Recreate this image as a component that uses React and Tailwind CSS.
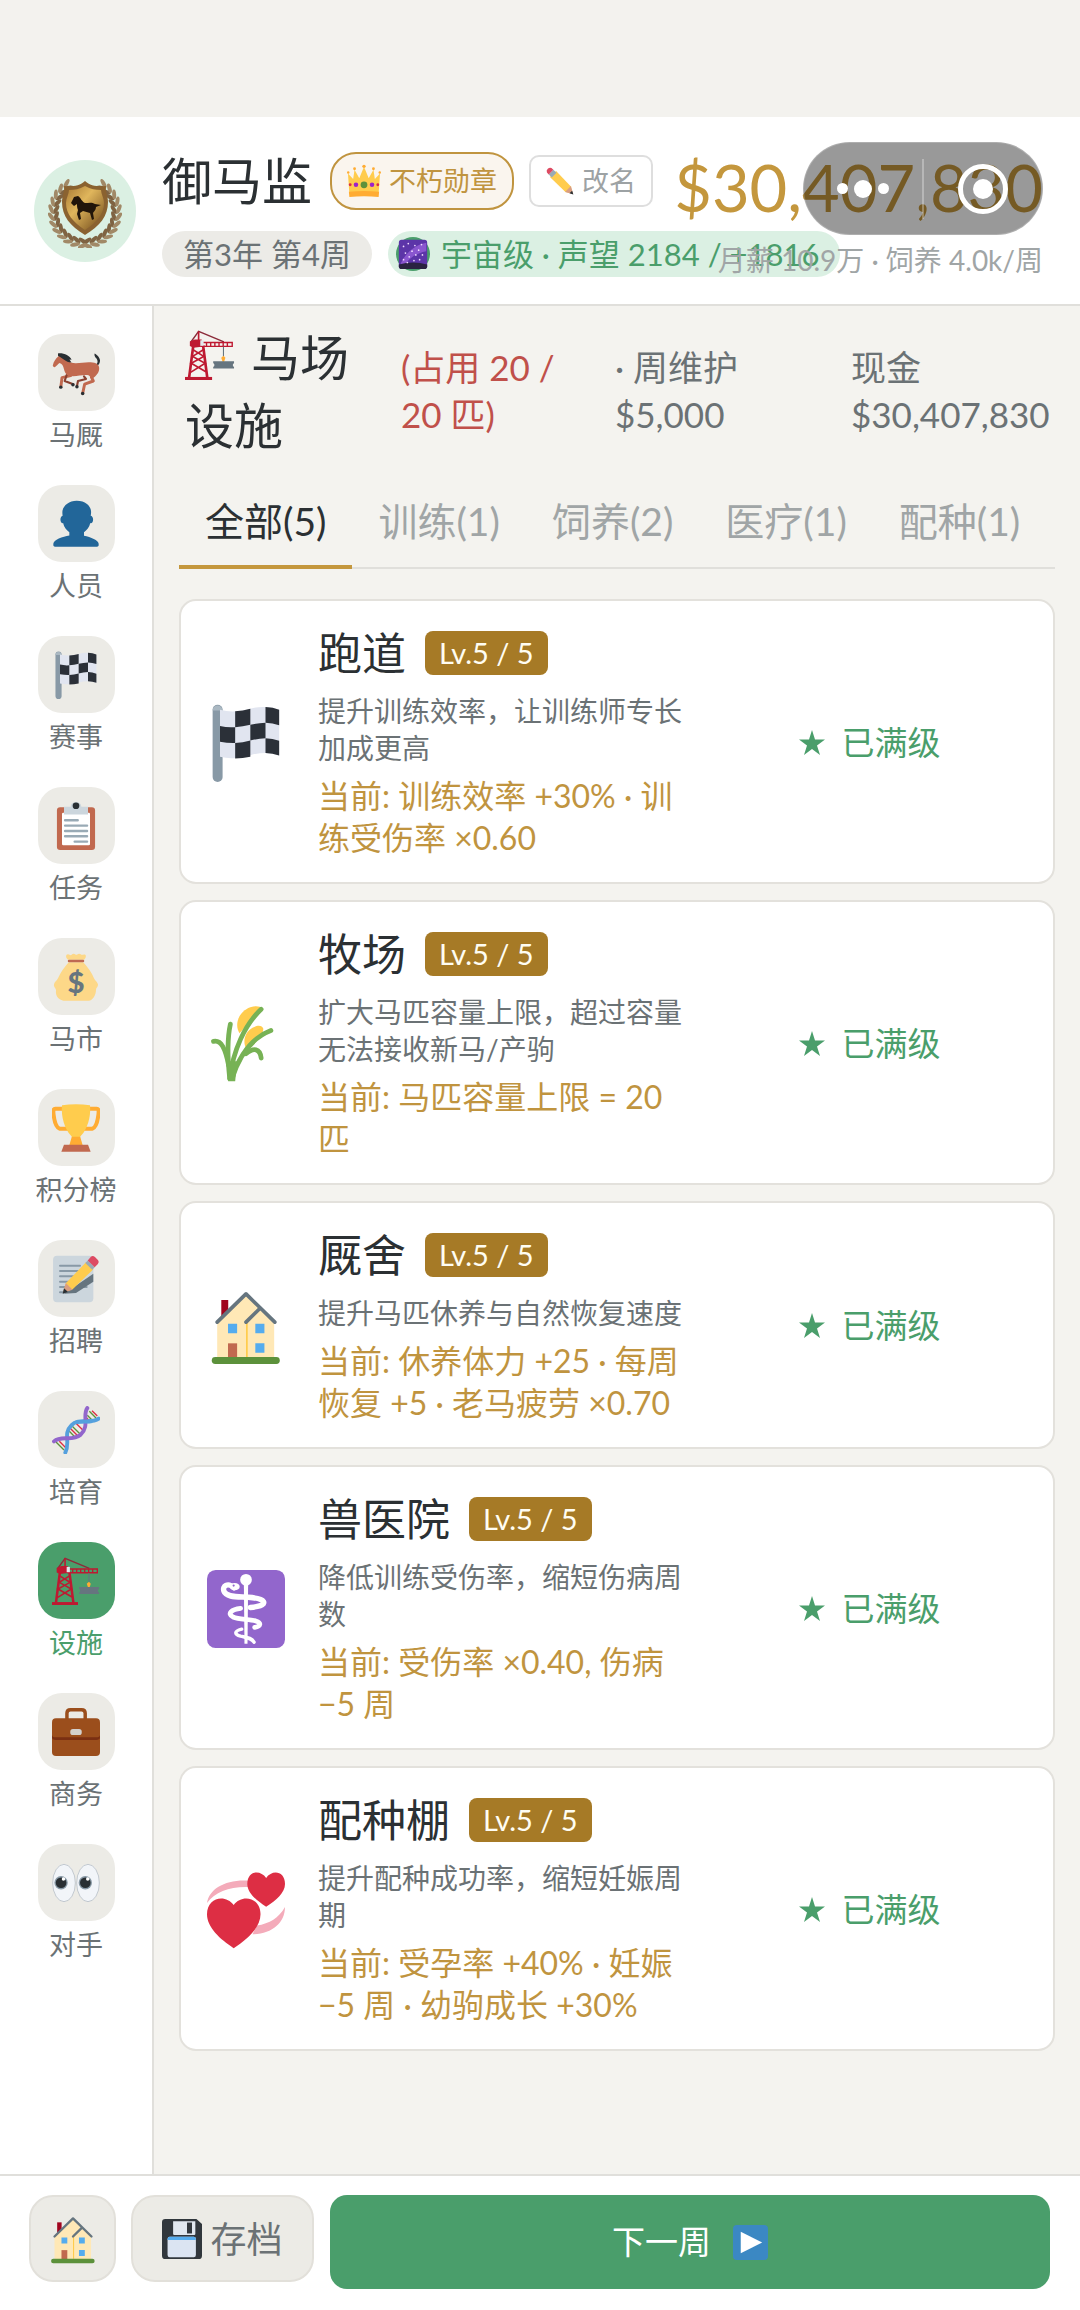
const INK = 'text-[#2b3033]';

function Svg({ className, children }) {
  return (
    <svg viewBox="0 0 36 36" className={`block shrink-0 ${className}`} aria-hidden="true">
      {children}
    </svg>
  );
}

function HorseIcon({ className }) {
  return (
    <Svg className={className}>
      <path d="M31 12.500c3.500-.5 4-3.500 2-5.700-1-1.200-1.400-2-1-3.400 2 1 4.200 3.400 4 5.600-.3 2.700-2 4.200-4 4.200z" fill="#292f33" />
      <g fill="none" strokeLinecap="round" strokeLinejoin="round">
        <path d="M14 20l-6.500 1.500-.8 6.500M29.500 21l1.500 3-6.500 2.300-1.500 7" stroke="#c1694f" strokeWidth="2.200" />
        <path d="M11 19.500L9.500 24l6.500 2.500M24 20.500l1.500 2-6 1.500-.8 4" stroke="#8a4030" strokeWidth="1.600" />
      </g>
      <path d="M.6 12.300C1.200 9.500 3 7 4.700 5.700l.3-2.400 1.800 1.400c3 1.300 4.600 4.400 7.200 5.400 4.500 1.400 10-.5 15-.1 4 .3 6.600 1.700 6.400 4.900-.1 3-2.200 5.300-5 7.300l-3-2.600c-4-.5-7.500.8-11.700.8-4 0-6-1.800-6.700-5.200-.5-2.500-1.500-4.400-3.400-4.700-1.300.9-2.300 2.500-3.500 3.100-1 0-1.600-.8-1.500-1.300z" fill="#c1694f" />
      <path d="M4.500 3.300c4.500-.4 8.700 1.600 10.200 4.700l-1.600-.2 1.500 2.400C10 9.800 8 6.700 4.500 5z" fill="#292f33" />
      <circle cx="6.600" cy="28.600" r="1.300" fill="#292f33" />
      <circle cx="15.700" cy="26.800" r="1.300" fill="#292f33" />
      <circle cx="18.700" cy="28.300" r="1.300" fill="#292f33" />
      <circle cx="23" cy="33.300" r="1.300" fill="#292f33" />
    </Svg>
  );
}

function PersonIcon({ className }) {
  return (
    <Svg className={className}>
      <path d="M24 26.799v-2.566c2-1.348 4.080-3.779 4.703-6.896.186.103.206.17.413.17.991 0 1.709-1.287 1.709-2.873 0-1.562-.823-2.827-1.794-2.865.187-.674.293-1.577.293-2.735C29.324 5.168 26 .527 18.541.527c-6.629 0-10.777 4.641-10.777 8.507 0 1.123.069 2.043.188 2.755-.911.137-1.629 1.352-1.629 2.845 0 1.587.804 2.873 1.796 2.873.206 0 .025-.067.209-.17C8.952 20.453 11 22.885 13 24.232v2.414c-5 .645-12 3.437-12 6.230v1.061C1 35 2.076 35 3.137 35h29.725C33.924 35 35 35 35 33.938v-1.061c0-2.615-6-5.225-11-6.078z" fill="#226699" />
    </Svg>
  );
}

function FlagIcon({ className }) {
  return (
    <Svg className={className}>
      <rect x="2.600" y=".4" width="4.600" height="35.600" rx="2.300" fill="#8899a6" />
      <path d="M2.600 3a2.300 2.300 0 0 1 4.600 0z" fill="#aab8c2" />
      <path d="M6 2.600q3.500 1 7 .8t7-1.200 7-.8 6.300 1.200v21.200q-3-1.200-6.300-1.200t-7 1-7 1.300-7-.5z" fill="#e1e5f0" />
      <g fill="#2b3038">
        <path d="M13 3.400q3.500-.2 7-1.200v7.400q-3.500.8-7 1.100zM27 1.400q3.500 0 6.300 1.200v7.200q-3-1.200-6.300-1.200z" />
        <path d="M6 10.200q3.500.8 7 .5v7.300q-3.500.1-7-.6zM20 9.600q3.500-.8 7-1v7.200q-3.500.2-7 1z" />
        <path d="M13 18q3.500-.3 7-1.200v7.500q-3.500.8-7 .8zM27 15.800q3.300 0 6.300 1.200v6.800q-3-1.200-6.300-1.200z" />
      </g>
    </Svg>
  );
}

function ClipboardIcon({ className }) {
  return (
    <Svg className={className}>
      <rect x="3.700" y="4" width="28.600" height="32" rx="2.400" fill="#c1694f" />
      <rect x="7.500" y="8" width="21" height="24.500" rx="1" fill="#fff" />
      <path d="M9 3.500h5A4 3.500 0 0 1 22 3.500h5v5.800H9z" fill="#ccd6dd" />
      <circle cx="18" cy="2.800" r="2.500" fill="#292f33" />
      <path d="M9.800 13.700h9.500M9.800 17.700h16.500M9.800 21.700h16.500M9.800 25.700h16.500M17 29.700h9.300" stroke="#99aab5" strokeWidth="1.800" strokeLinecap="round" />
    </Svg>
  );
}

function MoneyBagIcon({ className }) {
  return (
    <Svg className={className}>
      <path d="M12 5c-2-1.500-1.800-4 0-4 1 0 1.300.6 2 .6S15 .5 16.200.5s1.300.8 2.100.8.900-.8 2-.8 1.500.9 2.200.9 1-.5 2-.3c1.500.4 1 2.700-.5 4z" fill="#fdd888" />
      <path d="M12.500 7h11C27 11 30 15 31.500 19c1 2 3.200 3.500 3 5-.2 1.800-1.500 2-1.500 3.500 0 4-2.500 8-5.500 8.300h-19C4.500 35 2.500 32 3 28c0-1.500-2-2.500-1.500-4.500S3.500 21 4.500 19C6.500 14.500 9 11 12.500 7z" fill="#fdd888" />
      <rect x="11.800" y="5" width="12.400" height="2" rx="1" fill="#bf6952" />
      <text x="18" y="30" textAnchor="middle" fontFamily="Lato" fontWeight="900" fontSize="22" fill="#67757f">$</text>
    </Svg>
  );
}

function TrophyIcon({ className }) {
  return (
    <Svg className={className}>
      <path d="M9 3.500H2.500C1 3.500.8 5 1.200 8c.7 6 2 9.500 4.500 10.500H13M27 3.500h6.500c1.500 0 1.700 1.500 1.300 4.500-.7 6-2 9.500-4.500 10.500H23" fill="none" stroke="#ffac33" strokeWidth="3" strokeLinejoin="round" />
      <path d="M15 24h6l2 7H13z" fill="#ffac33" />
      <path d="M7.500 1Q18-.8 28.500 1C29.500 12 25 21 21 24.500h-6C11 21 6.500 12 7.500 1z" fill="#ffcc4d" />
      <path d="M9 30.500h18l2 5.300H7z" fill="#c1694f" />
    </Svg>
  );
}

function MemoIcon({ className }) {
  return (
    <Svg className={className}>
      <rect x=".8" y=".5" width="30.200" height="35" rx="3" fill="#ccd6dd" />
      <path d="M6 8h15M6 12h14M6 16h10M6 20h8M6 24h20M6 28h4" stroke="#8899a6" strokeWidth="1.500" strokeLinecap="round" />
      <path d="M31 14v6L18 28.500l-9 .5z" fill="#66757f" />
      <path d="M8.500 28l2-7 15-15.500 5.500 5.200-15.500 15z" fill="#ffcc4d" />
      <path d="M8.300 28.300l2-7.300 5.200 5z" fill="#d99e82" />
      <path d="M8 29l1-4 3 2.700z" fill="#292f33" />
      <path d="M25 6l1.800-1.800 5.200 5-1.800 1.900z" fill="#99aab5" />
      <path d="M26.800 4.200L29 1.500Q30.500 0 32.200 1.500l2.400 2.400q1 1.400-.2 2.800L32 9.200z" fill="#dd4a62" />
    </Svg>
  );
}

function DnaIcon({ className }) {
  return (
    <Svg className={className}>
      <path d="M28 4l5 5M26.500 7l4 4" stroke="#5c913b" strokeWidth="1" />
      <path d="M30 3.500l4 4M26 9l3 3" stroke="#dd2e44" strokeWidth="1" />
      <path d="M15 15l7 7M3 27l6 6M13 19l4 4" stroke="#5c913b" strokeWidth="1" />
      <path d="M18 13l6 6M14 17l6 6M5.500 26.500l5 5" stroke="#dd2e44" strokeWidth="1" />
      <path d="M35 9.500C29 14 20 8.500 14.500 14.500 8 21 14 27 10 35" fill="none" stroke="#55a0dd" strokeWidth="2.900" strokeLinecap="round" />
      <path d="M26.500 1.500C22.500 7 28.500 15 21.500 21.500 15 27 7 21.500 1.500 26.500" fill="none" stroke="#9266cc" strokeWidth="2.900" strokeLinecap="round" />
      <path d="M30 11.300c-4 1-8-.2-12 1" fill="none" stroke="#55a0dd" strokeWidth="2.900" />
    </Svg>
  );
}

function CraneIcon({ className }) {
  return (
    <Svg className={className}>
      <path d="M4 9L9.800 1 28 8.500" fill="none" stroke="#8b2b3a" strokeWidth="1" />
      <path d="M9.800 1v8" stroke="#be1931" strokeWidth="1.200" />
      <path d="M6 11L3 34M13 11l3 23" stroke="#be1931" strokeWidth="1.900" />
      <path d="M5.500 14l8 5-9 5 10.500 6M13.500 14l-8 5 9 5L4 30.500" fill="none" stroke="#be1931" strokeWidth="1.200" />
      <rect x="0" y="33.800" width="19.500" height="2.200" fill="#be1931" />
      <path d="M3.500 8.300L7 6.800h5V12l-6 .8-2.500-1.200z" fill="#be1931" />
      <path d="M12 9h22v2.800H12z" fill="none" stroke="#be1931" strokeWidth="1" />
      <path d="M15.500 9v3M18.500 9v3M21.500 9v3M24.500 9v3M27.500 9v3M30.500 9v3" stroke="#be1931" strokeWidth="1" />
      <rect x="11" y="7.400" width="2.400" height="4" fill="#e1e8ed" />
      <path d="M27.700 12v7" stroke="#66757f" strokeWidth=".8" />
      <path d="M27.700 18.500l1.400 1.500-1 3h-1l-1-3z" fill="#ffac33" />
      <path d="M20.300 22.500h15v1.300l-.8.800v1.400l.8.700v1H20.300v-1l.8-.7v-1.400l-.8-.8z" fill="#66757f" />
    </Svg>
  );
}

function BriefcaseIcon({ className }) {
  return (
    <Svg className={className}>
      <path d="M11.200 9V4q0-2.700 2.700-2.700h8.300q2.700 0 2.700 2.700v5" fill="none" stroke="#9b4e1c" strokeWidth="2.600" />
      <rect y="7.700" width="36" height="28.300" rx="3" fill="#9b4e1c" />
      <path d="M0 20q0 2 3 2h30q3 0 3-2v2q0 2-3 2H3q-3 0-3-2z" fill="#7a2f12" />
      <rect x="13.700" y="15.700" width="8.600" height="4.600" rx="2" fill="#d3d0cc" />
    </Svg>
  );
}

function EyesIcon({ className }) {
  return (
    <Svg className={className}>
      <ellipse cx="9" cy="18" rx="8.500" ry="14" fill="#f2f5f9" stroke="#99a5b0" strokeWidth=".4" />
      <ellipse cx="27" cy="18" rx="8.500" ry="14" fill="#f2f5f9" stroke="#99a5b0" strokeWidth=".4" />
      <circle cx="6.800" cy="17.800" r="5" fill="#8899a6" />
      <circle cx="25" cy="17.800" r="5" fill="#8899a6" />
      <circle cx="6.800" cy="17.800" r="4" fill="#292f33" />
      <circle cx="25" cy="17.800" r="4" fill="#292f33" />
      <circle cx="8.600" cy="15" r="1.300" fill="#fff" />
      <circle cx="26.800" cy="15" r="1.300" fill="#fff" />
    </Svg>
  );
}

function RiceIcon({ className }) {
  return (
    <Svg className={className}>
      <path d="M15 13C12.500 9 14.500 3 20 1c2.500-.8 4.500-.5 5.500.5z" fill="#ffcc4d" />
      <path d="M18.500 21C16 17 17.500 12.500 21 10.500c2.500-1.500 4.500-1.200 5 .5 0 2-2 5.500-7.500 10z" fill="#ffcc4d" />
      <g fill="none" stroke="#77b255" strokeWidth="2.200" strokeLinecap="round">
        <path d="M10.500 34c-1-9-1.500-17 .3-25.200" />
        <path d="M10.500 34C12 21 17.500 9 25 2" />
        <path d="M11.500 34C15 23 21 15 29.500 11.800" />
        <path d="M10 28C8.500 20 6.500 16 3 16.800" />
        <path d="M18 22.500c3.500-3 6.500-2.500 7 2" />
      </g>
      <path d="M9 26h5l-1 9.200H9.800z" fill="#77b255" />
    </Svg>
  );
}

function HouseIcon({ className }) {
  return (
    <Svg className={className}>
      <path d="M6.600 6h3.200v8H6.600z" fill="#a0041e" />
      <path d="M18 3.500L31 16v16.500H4.700V16z" fill="#ffe8b6" />
      <path d="M18 16l.8-.8V32.300H18z" fill="#ffcc4d" />
      <path d="M4.700 16.200L18 3.200l13.300 13M24.500 9.800L18 16.200" fill="none" stroke="#66757f" strokeWidth="1.700" strokeLinecap="round" strokeLinejoin="round" />
      <path d="M9.700 17h4.200v4.300H9.700zM22.300 17h4.200v4.300h-4.200zM22.300 26h4.200v4.300h-4.200z" fill="#55acee" />
      <path d="M9.700 26h4.200v6.500H9.700z" fill="#c1694f" />
      <rect x="2.200" y="32.300" width="31.400" height="3.200" rx="1.600" fill="#5c913b" />
    </Svg>
  );
}

function MedicalIcon({ className }) {
  return (
    <Svg className={className}>
      <rect width="36" height="36" rx="4" fill="#9266cc" />
      <circle cx="18" cy="4.500" r="2.700" fill="#fff" />
      <path d="M17 5h2l-.3 29h-1.400z" fill="#fff" />
      <g fill="none" stroke="#fff" strokeLinecap="round">
        <path d="M12.500 8.200C9.500 5.500 7 7.500 7.800 9.800c1 3 6.500 2.500 11.200 2.800 5 .3 8 1.400 7 3-1 1.200-3.500 1.500-6 1.700" strokeWidth="2.500" />
        <path d="M15.500 17.700c-4 .5-6.500 2.300-3.500 4 3 1.300 7 .8 10.500 1.800 2.800 1 2.300 2.500-.5 3" strokeWidth="2.200" />
        <path d="M16 27.300c-3.500.9-3.500 2.400-.5 3.200 3 .7 5 .8 6.200 2.800" strokeWidth="1.600" />
      </g>
      <ellipse cx="12.800" cy="7.700" rx="2.300" ry="1.700" fill="#fff" />
      <circle cx="12.300" cy="7.200" r=".5" fill="#9266cc" />
    </Svg>
  );
}

function HeartsIcon({ className }) {
  return (
    <Svg className={className}>
      <path d="M0 14.800C1 8 9 3.500 20 4.500v3C11 7 4 9.500 0 14.800zM36 16.600C36 24 30 29 21 29.200l2-4c6-1 10-3.500 13-8.600z" fill="#f4abba" />
      <path d="M27.300 3.200C30-.8 36-.2 36 6c0 4-4 7.500-8.700 10.500C22.600 13.500 18.600 10 18.600 6c0-6.200 6-6.800 8.700-2.800z" fill="#dd2e44" />
      <path d="M12.300 15.700C16 10.500 24.700 12 24.700 20c0 6-6 11.500-12.400 15.600C6 31.500 0 26 0 20c0-8 8.600-9.500 12.300-4.300z" fill="#dd2e44" />
    </Svg>
  );
}

function CrownIcon({ className }) {
  return (
    <Svg className={className}>
      <path d="M2.500 31L1 10l5.500 6L8 6l5 9 5-12 5 12 5-9 1.500 10 5.500-6-1.500 21z" fill="#ffcc4d" />
      <path d="M2 29.500q16-2 32 0l-.5 5.500q-15.500-1.500-31 0z" fill="#ffac33" />
      <g fill="#ffac33">
        <circle cx="1.300" cy="9" r="1.300" />
        <circle cx="8" cy="5" r="1.500" />
        <circle cx="18" cy="2.500" r="1.800" />
        <circle cx="28" cy="5" r="1.500" />
        <circle cx="34.700" cy="9" r="1.300" />
      </g>
      <circle cx="18" cy="22" r="3.600" fill="#5c913b" />
      <circle cx="9.500" cy="22" r="2.400" fill="#9c22c9" />
      <circle cx="26.500" cy="22" r="2.400" fill="#9c22c9" />
      <circle cx="3.400" cy="22" r="1.500" fill="#dd2e44" />
      <circle cx="32.600" cy="22" r="1.500" fill="#dd2e44" />
    </Svg>
  );
}

function PencilIcon({ className }) {
  return (
    <Svg className={className}>
      <path d="M5 13l8-8 19 20 2 9-9-2z" fill="#ffcc4d" />
      <path d="M32 24.500L35 35l-10.500-3z" fill="#d99e82" />
      <path d="M33.600 30.500L35.200 35.400l-5-1.500z" fill="#292f33" />
      <path d="M3.500 9.500l6-6 4 4-6 6z" fill="#99aab5" />
      <path d="M1.200 7Q0 4.500 2.300 2.300T7 1.200l2.500 2.300-6 6z" fill="#dd4a62" />
    </Svg>
  );
}

function FloppyIcon({ className }) {
  return (
    <Svg className={className}>
      <path d="M3 0h28l5 4.500V33q0 3-3 3H3q-3 0-3-3V3q0-3 3-3z" fill="#31373d" />
      <path d="M10 2h20v11.500q0 1-1 1H11q-1 0-1-1z" fill="#e1e8f0" />
      <rect x="22.500" y="3.200" width="4.500" height="9.800" fill="#31373d" />
      <rect x="5" y="16" width="25.500" height="18.500" rx="2" fill="#dbe4f2" />
      <path d="M5 19v-1q0-2 2-2h21.500q2 0 2 2v1z" fill="#55acee" />
    </Svg>
  );
}

function PlayIcon({ className }) {
  return (
    <Svg className={className}>
      <rect width="36" height="36" rx="4" fill="#3b88c3" />
      <path d="M8 7l22 11L8 29z" fill="#fff" />
    </Svg>
  );
}

const STARS = [[8, 10], [13, 7], [20, 9], [27, 8], [24, 14], [17, 15], [10, 17], [14, 21], [21, 19], [28, 19], [8, 24], [19, 25], [25, 24], [12, 27]];

function GalaxyIcon({ className }) {
  return (
    <Svg className={className}>
      <circle cx="18" cy="18" r="18" fill="#4a9e6b" />
      <rect x="3" y="3" width="30" height="31" rx="3" fill="#5c35a8" />
      <path d="M5 28C12 14 22 8 32 6v9C22 17 14 22 9 30z" fill="#8a56cf" />
      <path d="M3 29q15-4 30 0v2q0 3-3 3H6q-3 0-3-3z" fill="#2a2340" />
      {STARS.map(([x, y]) => <circle key={`${x}-${y}`} cx={x} cy={y} r=".9" fill="#f2dcff" />)}
    </Svg>
  );
}

const LEAVES = Array.from({ length: 12 }, (_, i) => 94 + i * 13);

// brass shield with a galloping horse inside a laurel wreath
function Emblem() {
  return (
    <svg viewBox="0 0 74 74" className="block size-[74px]" role="img" aria-label="马场徽章">
      <defs>
        <linearGradient id="brass" x1="0" y1="0" x2="1" y2="1">
          <stop offset="0" stopColor="#a87a35" />
          <stop offset=".4" stopColor="#e0b65c" />
          <stop offset="1" stopColor="#6b4518" />
        </linearGradient>
      </defs>
      {LEAVES.map((deg) => (
        <g key={deg}>
          {[deg, 180 - deg].map((a, side) => {
            const r = (a * Math.PI) / 180;
            return [29, 34].map((radius, k) => {
              const x = 37 + radius * Math.cos(r);
              const y = 38 + radius * Math.sin(r);
              const turn = a + (side === 0 ? 90 : -90) + (k === 0 ? -28 : 28) * (side === 0 ? -1 : 1);
              return (
                <ellipse key={`${a}-${radius}`} cx={x} cy={y} rx="5" ry="2" transform={`rotate(${turn} ${x} ${y})`} fill={k === 0 ? '#7f6342' : '#a18967'} />
              );
            });
          })}
        </g>
      ))}
      <path d="M37 7c5 5 14 6 21 5-1 5 2 10 2 16 0 14-8 24-23 33C22 52 14 42 14 28c0-6 3-11 2-16 7 1 16 0 21-5z" fill="#8a6230" />
      <path d="M37 12c6 3 10 4 16 4 0 4 3 8 3 13 0 11-7 19-19 27-12-8-19-16-19-27 0-5 3-9 3-13 6 0 10-1 16-4z" fill="url(#brass)" />
      <path d="M23 29l3-6 4-1c3 2 4 6 7 7 4 0 7-1 10 1l6 1-5 2c0 3-2 4-3 6l1 6-2 1-2-7-7-2-3 2 1 6-2 1-2-6 1-4c-1-2-1-4-1-6l-3 2z" fill="#21150a" />
    </svg>
  );
}

const NAV = [
  { label: '马厩', Icon: HorseIcon },
  { label: '人员', Icon: PersonIcon },
  { label: '赛事', Icon: FlagIcon },
  { label: '任务', Icon: ClipboardIcon },
  { label: '马市', Icon: MoneyBagIcon },
  { label: '积分榜', Icon: TrophyIcon },
  { label: '招聘', Icon: MemoIcon },
  { label: '培育', Icon: DnaIcon },
  { label: '设施', Icon: CraneIcon, active: true },
  { label: '商务', Icon: BriefcaseIcon },
  { label: '对手', Icon: EyesIcon },
];

const TABS = ['全部(5)', '训练(1)', '饲养(2)', '医疗(1)', '配种(1)'];

const FACILITIES = [
  { name: '跑道', Icon: FlagIcon, desc: '提升训练效率，让训练师专长加成更高', effect: '训练效率 +30% · 训练受伤率 ×0.60' },
  { name: '牧场', Icon: RiceIcon, desc: '扩大马匹容量上限，超过容量无法接收新马/产驹', effect: '马匹容量上限 = 20 匹' },
  { name: '厩舍', Icon: HouseIcon, desc: '提升马匹休养与自然恢复速度', effect: '休养体力 +25 · 每周恢复 +5 · 老马疲劳 ×0.70' },
  { name: '兽医院', Icon: MedicalIcon, desc: '降低训练受伤率，缩短伤病周数', effect: '受伤率 ×0.40, 伤病 −5 周' },
  { name: '配种棚', Icon: HeartsIcon, desc: '提升配种成功率，缩短妊娠周期', effect: '受孕率 +40% · 妊娠 −5 周 · 幼驹成长 +30%' },
];

function Header() {
  return (
    <header className="relative border-b-2 border-[#e0dfdb] bg-[#f3f2ee] pt-[117px]">
      <div className="flex h-[187px] items-start bg-white pl-[34px] pr-[37px]">
        <div className="mt-[43px] flex size-[102px] shrink-0 items-center justify-center rounded-full bg-[#dbf0e3]">
          <Emblem />
        </div>
        <div className="ml-[26px] mt-[35px] w-0 flex-1 whitespace-nowrap">
          <div className="flex h-[58px] items-center">
            <h1 className={`text-[50px] ${INK}`}>御马监</h1>
            <span className="ml-[18px] flex h-[58px] shrink-0 items-center gap-[8px] rounded-[26px] border-2 border-[#c0943f] bg-[#faf5ee] px-[15px] text-[27px] text-[#c0943f]">
              <CrownIcon className="size-[34px]" />
              不朽勋章
            </span>
            <button className="ml-[15px] flex h-[52px] shrink-0 items-center gap-[8px] rounded-[10px] border-2 border-[#dedede] bg-white px-[15px] text-[27px] text-[#9da2a4]">
              <PencilIcon className="size-[28px]" />
              改名
            </button>
          </div>
          <div className="mt-[21px] flex h-[46px] gap-[16px] text-[31px]">
            <span className="flex shrink-0 items-center rounded-full bg-[#ecebe7] px-[21px] text-[#6b7275]">第3年 第4周</span>
            <span className="flex shrink-0 items-center gap-[11px] rounded-full bg-[#dbf0e3] pl-[8px] pr-[21px] text-[#4a9e6b]">
              <GalaxyIcon className="size-[34px]" />
              宇宙级 · 声望 2184 / +1816
            </span>
          </div>
        </div>
        <div className="relative mt-[28px] flex shrink-0 flex-col items-end">
          <p className="text-[65px] leading-[84px] text-[#c4973d]">$30,407,830</p>
          <p className="mt-[11px] whitespace-nowrap text-[28px] leading-[40px] text-[#a0a5a6]">月薪 10.9万 · 饲养 4.0k/周</p>
        </div>
      </div>
      <div className="absolute right-[37px] top-[142px] flex h-[93px] w-[240px] items-center rounded-full border border-white/20 bg-black/40">
        <button className="flex flex-1 items-center justify-center gap-[6px]" aria-label="更多">
          <span className="size-[11px] rounded-full bg-white" />
          <span className="size-[18px] rounded-full bg-white" />
          <span className="size-[11px] rounded-full bg-white" />
        </button>
        <span className="h-[60px] w-[2px] bg-white/30" />
        <button className="flex flex-1 items-center justify-center" aria-label="关闭">
          <span className="flex size-[50px] items-center justify-center rounded-full border-[5px] border-white">
            <span className="size-[20px] rounded-full bg-white" />
          </span>
        </button>
      </div>
    </header>
  );
}

function Sidebar() {
  return (
    <nav className="flex w-[154px] shrink-0 flex-col gap-[30px] border-r-2 border-[#e0dfdb] bg-white pt-[28px]">
      {NAV.map(({ label, Icon, active }) => (
        <a key={label} href="#" className={`flex flex-col items-center gap-[4px] ${active ? 'text-[#4a9e6b]' : 'text-[#6b7275]'}`}>
          <span className={`flex size-[77px] items-center justify-center rounded-[24px] ${active ? 'bg-[#4a9e6b]' : 'bg-[#ecebe6]'}`}>
            <Icon className="size-[48px]" />
          </span>
          <span className="text-[27px] leading-[40px]">{label}</span>
        </a>
      ))}
    </nav>
  );
}

function FacilityCard({ name, Icon, desc, effect }) {
  return (
    <article className="flex items-center rounded-[17px] border-2 border-[#e3e1dc] bg-white pb-[23px] pl-[26px] pt-[25px]">
      <Icon className="size-[78px]" />
      <div className="ml-[33px] w-[368px] shrink-0">
        <div className="flex h-[54px] items-center gap-[19px]">
          <h3 className={`text-[44px] leading-[54px] ${INK}`}>{name}</h3>
          <span className="rounded-[8px] bg-[#a67a26] px-[14px] text-[29px] leading-[44px] text-[#fffdf2]">Lv.5 / 5</span>
        </div>
        <p className="mt-[13px] text-[28px] leading-[37px] text-[#6b7275]">{desc}</p>
        <p className="mt-[8px] text-[32px] leading-[42px] text-[#c0943f]">{`当前: ${effect}`}</p>
      </div>
      <p className="flex flex-1 items-center justify-center gap-[17px] text-[33px] text-[#4a9e6b]">
        <svg viewBox="0 0 26 26" className="size-[26px]" aria-hidden="true">
          <path d="M13 0l3 9.500h10l-8 6 3 9.500-8-6-8 6 3-9.500-8-6h10z" fill="currentColor" />
        </svg>
        已满级
      </p>
    </article>
  );
}

export default function App() {
  return (
    <div className="flex min-h-screen flex-col bg-[#f4f3ef] font-[Lato,'Noto_Sans_CJK_SC',sans-serif]">
      <Header />
      <div className="flex flex-1">
        <Sidebar />
        <main className="min-w-0 flex-1 px-[25px] pb-[60px] pt-[17px]">
          <div className="grid grid-cols-[216fr_214fr_236fr_204fr] pl-[6px] text-[35px] leading-[47px] text-[#6b7275]">
            <h2 className={`pr-[20px] text-[49px] leading-[68px] ${INK}`}>
              <CraneIcon className="mr-[16px] !inline-block size-[50px] align-[-4px]" />
              马场设施
            </h2>
            <p className="pr-[40px] pt-[21px] text-[#c0504a]">(占用 20 / 20 匹)</p>
            <p className="pr-[90px] pt-[21px]">· 周维护 $5,000</p>
            <p className="pt-[21px]">现金 $30,407,830</p>
          </div>

          <div className="mt-[38px] flex border-b-2 border-[#e0dfdb]" role="tablist">
            {TABS.map((tab, i) => (
              <button
                key={tab}
                role="tab"
                aria-selected={i === 0}
                className={`-mb-[2px] whitespace-nowrap border-b-4 px-[26px] pb-[20px] text-[39px] leading-[48px] ${i === 0 ? `border-[#c4973d] ${INK}` : 'border-transparent text-[#a0a5a6]'}`}
              >
                {tab}
              </button>
            ))}
          </div>

          <section className="mt-[30px] flex flex-col gap-[16px]">
            {FACILITIES.map((f) => <FacilityCard key={f.name} {...f} />)}
          </section>
        </main>
      </div>
      <footer className="flex items-start border-t-2 border-[#e0dfdb] bg-white pb-[21px] pl-[29px] pr-[30px] pt-[19px]">
        <button className="flex size-[87px] shrink-0 items-center justify-center rounded-[24px] border-2 border-[#e2e0da] bg-[#ecebe6]" aria-label="主页">
          <HouseIcon className="size-[50px]" />
        </button>
        <button className="ml-[15px] flex h-[87px] w-[183px] shrink-0 items-center justify-center gap-[8px] rounded-[24px] border-2 border-[#e2e0da] bg-[#ecebe6] text-[36px] text-[#6b7275]">
          <FloppyIcon className="size-[40px]" />
          存档
        </button>
        <button className="ml-[16px] flex h-[94px] flex-1 items-center justify-center gap-[22px] rounded-[17px] bg-[#4a9e6b] text-[33px] text-white">
          下一周
          <PlayIcon className="size-[35px]" />
        </button>
      </footer>
    </div>
  );
}
